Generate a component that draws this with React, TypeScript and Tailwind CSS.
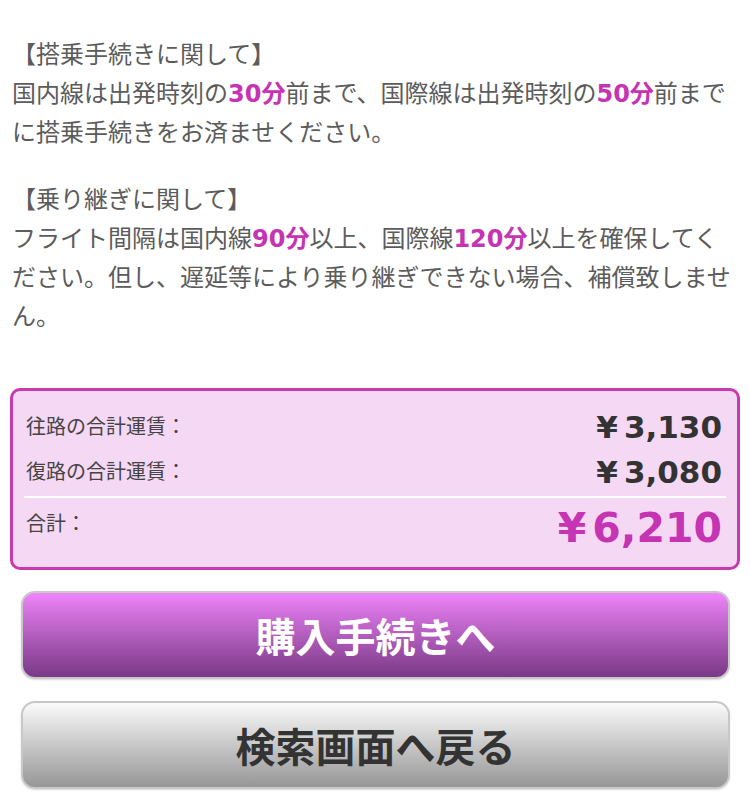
import React from "react";

const body = '"Noto Sans CJK JP", "Noto Sans", sans-serif';
const num = '"DejaVu Sans", "Noto Sans CJK JP", sans-serif';

function B({ children }: { children: React.ReactNode }) {
  return (
    <span className="font-bold text-[#c534b2] leading-none" style={{ fontFamily: num }}>
      {children}
    </span>
  );
}

function F() {
  return <span className="font-bold text-[#c534b2] leading-none">分</span>;
}

export default function App() {
  return (
    <div className="w-[750px] h-[796px] bg-white overflow-hidden" style={{ fontFamily: body }}>
      <div className="pt-[33px] px-[12px] text-[24px] leading-[39px] text-[#5c5c5c]">
        <p>【搭乗手続きに関して】</p>
        <p>
          国内線は出発時刻の<B>30</B><F />前まで、国際線は出発時刻の<B>50</B><F />前までに搭乗手続きをお済ませください。
        </p>
        <p className="mt-[28px]">【乗り継ぎに関して】</p>
        <p>
          フライト間隔は国内線<B>90</B><F />以上、国際線<B>120</B><F />以上を確保してください。但し、遅延等により乗り継ぎできない場合、補償致しません。
        </p>
      </div>

      <div className="mt-[54px] mx-[10px] border-[3px] border-[#c93aae] rounded-[10px] bg-[#f5d8f3] pt-[14px] pb-[7px]">
        <div className="h-[45px] flex items-center justify-between pl-[13px] pr-[15px]">
          <span className="text-[20px] text-[#444] -mt-[4px]">往路の合計運賃：</span>
          <span className="text-[31px] font-bold text-[#333]" style={{ fontFamily: num }}>
            ¥<span className="ml-[6px]">3,130</span>
          </span>
        </div>
        <div className="h-[45px] flex items-center justify-between pl-[13px] pr-[15px]">
          <span className="text-[20px] text-[#444] -mt-[4px]">復路の合計運賃：</span>
          <span className="text-[31px] font-bold text-[#333]" style={{ fontFamily: num }}>
            ¥<span className="ml-[6px]">3,080</span>
          </span>
        </div>
        <div className="mt-[1px] mx-[11px] h-[2px] bg-white" />
        <div className="h-[62px] flex items-center justify-between pl-[13px] pr-[15px]">
          <span className="text-[20px] text-[#444] -mt-[12px]">合計：</span>
          <span className="text-[41px] font-bold text-[#c534b2]" style={{ fontFamily: num }}>
            ¥<span className="ml-[6px]">6,210</span>
          </span>
        </div>
      </div>

      <div className="mt-[21px] ml-[21px] mr-[20px] h-[88px] rounded-[14px] border-2 border-[#c8c8c8] bg-gradient-to-b from-[#ef84f9] to-[#7a3986] flex items-center justify-center shadow-[0_1px_2px_rgba(0,0,0,0.15)]">
        <span className="text-[40px] font-bold text-white">購入手続きへ</span>
      </div>

      <div className="mt-[22px] ml-[21px] mr-[20px] h-[88px] rounded-[14px] border-2 border-[#c8c8c8] bg-gradient-to-b from-[#fbfbfb] to-[#979797] flex items-center justify-center shadow-[0_1px_2px_rgba(0,0,0,0.15)]">
        <span className="text-[40px] font-bold text-[#333]">検索画面へ戻る</span>
      </div>
    </div>
  );
}
